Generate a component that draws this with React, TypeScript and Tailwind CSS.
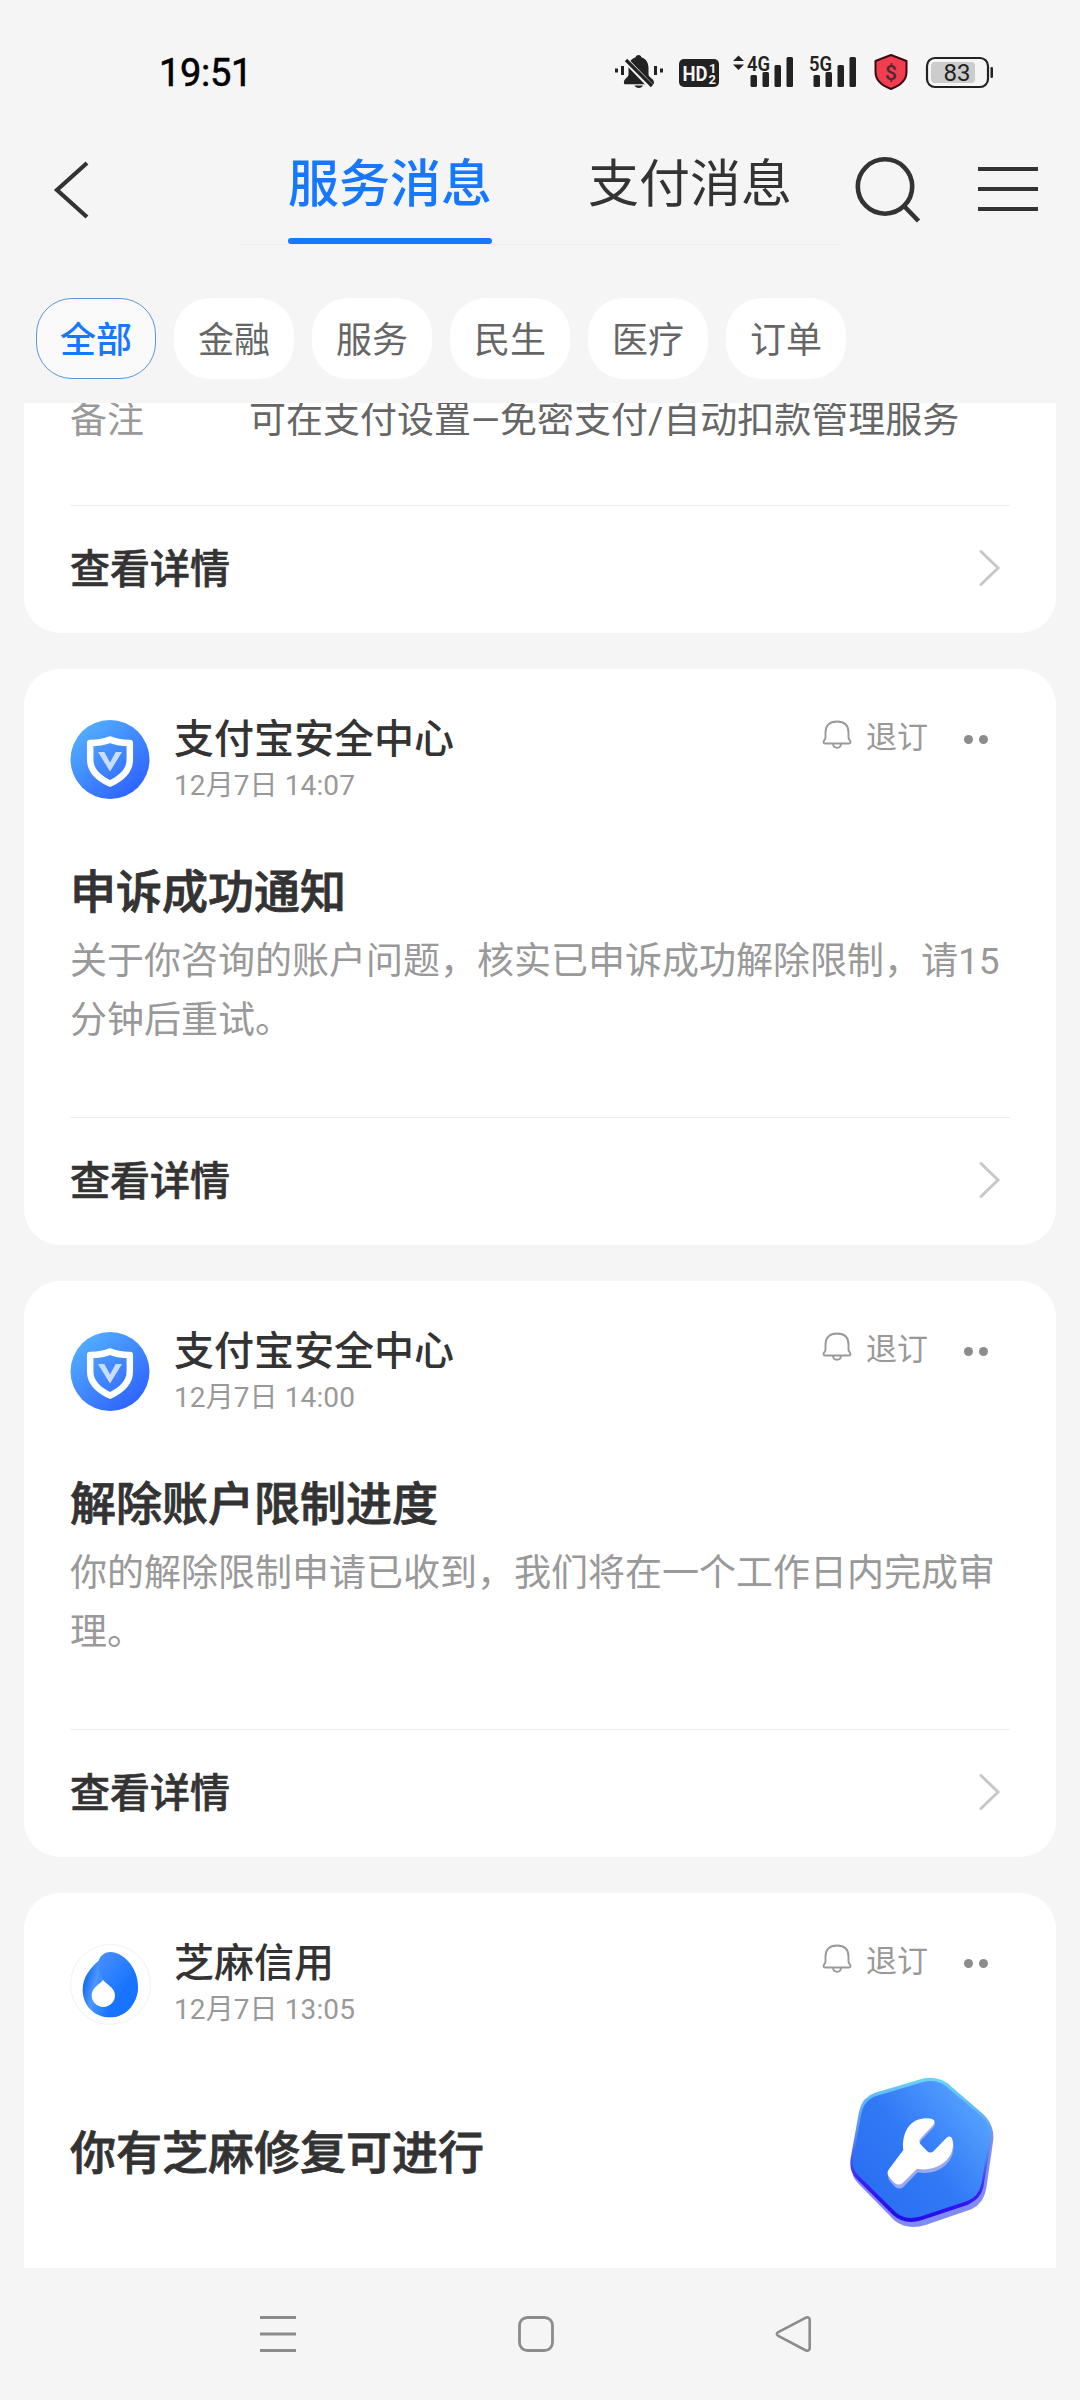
import type { ReactNode } from "react";

const chips = ["全部", "金融", "服务", "民生", "医疗", "订单"];

function StatusBar() {
  return (
    <div className="flex h-[144px] items-start justify-between pl-[159px] pr-[86px] text-[#222]">
      <span className="mt-[49px] text-[38px] leading-[48px] tracking-[-0.3px] text-black [-webkit-text-stroke:0.6px]">19:51</span>
      <svg className="mt-[50px]" width="382" height="44" viewBox="612 50 382 44" fill="none">
        {/* Muted bell */}
        <path d="M638.500 55c1.800 0 2.600 1 2.800 2.200 5.200 1.500 7.200 6 7.200 11v6c0 3.500 5.500 4 5.500 8.500 0 1-.6 1.600-1.500 1.600h-27c-1 0-1.600-.6-1.600-1.600 0-4.500 4.600-5 4.600-8.500v-6c0-5 2-9.500 7.200-11 .2-1.200 1-2.200 2.800-2.200z" fill="#222" />
        <path d="M634.500 85.500h8.500c-1 3.300-7.500 3.300-8.500 0z" fill="#222" />
        <path d="M624 58.500l28 29" stroke="#f5f5f5" strokeWidth="6" />
        <path d="M626 60l26 26" stroke="#222" strokeWidth="3.200" />
        <path d="M622.500 66v9M655.500 66v9M616.500 68.500v4M661.500 68.500v4" stroke="#222" strokeWidth="3" />
        {/* HD badge */}
        <rect x="679" y="59" width="40" height="28" rx="5" fill="#222" />
        <text x="682.500" y="80.500" fontSize="21" fontWeight="700" textLength="25" lengthAdjust="spacingAndGlyphs" fill="#f5f5f5">HD</text>
        <text x="709" y="73" fontSize="13" fontWeight="700" fill="#f5f5f5">1</text>
        <text x="708.500" y="84" fontSize="13" fontWeight="700" fill="#f5f5f5">2</text>
        {/* 4G */}
        <path d="M738.500 55.500l5.500 5.500h-11zM738.500 70l5.500-5.500h-11z" fill="#222" />
        <text x="747" y="70.500" fontSize="21" fontWeight="600" textLength="23" lengthAdjust="spacingAndGlyphs" fill="#222">4G</text>
        <g fill="#222">
          <rect x="750.500" y="75" width="6.500" height="12" rx="1.500" />
          <rect x="762.500" y="72" width="6.500" height="15" rx="1.500" />
          <rect x="774.500" y="65" width="6.500" height="22" rx="1.500" />
          <rect x="786.500" y="57" width="6.500" height="30" rx="1.500" />
        </g>
        {/* 5G */}
        <text x="809" y="70.500" fontSize="21" fontWeight="600" textLength="23" lengthAdjust="spacingAndGlyphs" fill="#222">5G</text>
        <g fill="#222">
          <rect x="813.500" y="75" width="6.500" height="12" rx="1.500" />
          <rect x="825.500" y="72" width="6.500" height="15" rx="1.500" />
          <rect x="837.500" y="65" width="6.500" height="22" rx="1.500" />
          <rect x="849.500" y="57" width="6.500" height="30" rx="1.500" />
        </g>
        {/* Payment shield */}
        <path d="M891 55l15.500 6v11c0 8-6 13.500-15.500 17-9.500-3.500-15.500-9-15.500-17V61z" fill="#f23c50" stroke="#3a0a10" strokeWidth="2" strokeLinejoin="round" />
        <text x="891" y="80" textAnchor="middle" fontSize="21" fontWeight="500" fill="#4a2a2e">$</text>
        {/* Battery */}
        <rect x="927" y="58" width="61" height="29" rx="8" stroke="#222" strokeWidth="2.200" />
        <rect x="931" y="62" width="44" height="21" rx="4" fill="#ccc" />
        <rect x="990.500" y="67" width="2.500" height="11" rx="1.200" fill="#222" />
        <text x="957" y="81" textAnchor="middle" fontSize="24" fill="#222">83</text>
      </svg>
    </div>
  );
}

function Header() {
  return (
    <header className="flex h-[154px] text-[51px] text-[#333]">
      <svg className="ml-[52px] mt-[16px] shrink-0" width="40" height="60" viewBox="0 0 40 60" fill="none" stroke="#333" strokeWidth="4.200">
        <path d="M35 3L5 30l30 27" />
      </svg>
      <div className="ml-[148px] flex h-[101px] w-[600px] justify-between border-b border-[#efefef] px-12">
        <div className="flex flex-col justify-between">
          <span className="mt-[11px] font-medium leading-[60px] text-[#1677ff]">服务消息</span>
          <span className="h-[6px] w-[204px] rounded-full bg-[#1677ff]" />
        </div>
        <span className="mt-[11px] leading-[60px]">支付消息</span>
      </div>
      <svg className="ml-[14px] mt-[10px] shrink-0" width="70" height="70" viewBox="854 154 70 70" fill="none" stroke="#333" strokeWidth="4.600">
        <circle cx="885" cy="186.500" r="27.200" />
        <path d="M904.500 206.500l14 14.500" />
      </svg>
      <div className="ml-[54px] mt-[23px] flex flex-col gap-4">
        <span className="h-1 w-[60px] bg-[#333]" />
        <span className="h-1 w-[60px] bg-[#333]" />
        <span className="h-1 w-[60px] bg-[#333]" />
      </div>
    </header>
  );
}

function ShieldAvatar({ id }: { id: string }) {
  return (
    <svg width="80" height="80" viewBox="0 0 80 80" fill="none">
      <defs>
        <linearGradient id={id} x1="12" y1="8" x2="66" y2="72" gradientUnits="userSpaceOnUse">
          <stop stopColor="#53adff" />
          <stop offset="1" stopColor="#2e63ff" />
        </linearGradient>
      </defs>
      <circle cx="40" cy="39.500" r="39.500" fill={`url(#${id})`} />
      <path d="M40 19.500c-5 2.300-12 3.300-19.800 3.600v16.500c0 11.500 8 18.500 19.800 24 11.800-5.500 19.800-12.500 19.800-24V23.100c-7.800-.3-14.800-1.300-19.800-3.600z" stroke="#fff" strokeWidth="6.500" strokeLinejoin="round" />
      <path d="M28 32h6.300L40 42.500 45.700 32H52L40 51.500z" fill="#c9deff" />
    </svg>
  );
}

function SesameAvatar() {
  return (
    <svg width="81" height="81" viewBox="90 128 243 243" fill="none">
      <defs>
        <linearGradient id="sesame-right" x1="180" y1="180" x2="270" y2="250" gradientUnits="userSpaceOnUse">
          <stop stopColor="#438cff" />
          <stop offset="1" stopColor="#1674ff" />
        </linearGradient>
        <linearGradient id="sesame-left" x1="128" y1="270" x2="215" y2="290" gradientUnits="userSpaceOnUse">
          <stop stopColor="#1a6fee" />
          <stop offset="0.350" stopColor="#4b98ff" />
          <stop offset="1" stopColor="#1674ff" />
        </linearGradient>
      </defs>
      <circle cx="211.500" cy="249.500" r="120" fill="#fff" stroke="#f2f2f2" strokeWidth="3" />
      <path d="M176 178c-26 22-48 50-48 87 0 48 35 83 82 83s84-40 84-95l-60-60z" fill="url(#sesame-left)" />
      <path d="M174 186c3-20 18-34 38-34 34 0 82 43 82 103 0 45-30 83-68 92 12-40 5-80-18-98-20-16-36-38-34-63z" fill="url(#sesame-right)" />
      <path d="M189 235c6 12 36 22 36 47a35 35 0 0 1-70 0c0-25 28-35 34-47z" fill="#fff" />
    </svg>
  );
}

function WrenchBadge() {
  return (
    <svg className="shrink-0" width="150" height="155" viewBox="205 525 450 465" fill="none">
      <defs>
        <linearGradient id="hex-face" x1="280" y1="880" x2="600" y2="620" gradientUnits="userSpaceOnUse">
          <stop stopColor="#2a70f2" />
          <stop offset="0.450" stopColor="#3279f6" />
          <stop offset="1" stopColor="#55a2ff" />
        </linearGradient>
        <linearGradient id="hex-rim" x1="440" y1="530" x2="400" y2="970" gradientUnits="userSpaceOnUse">
          <stop stopColor="#68d6fb" />
          <stop offset="0.450" stopColor="#5b8cf5" />
          <stop offset="0.750" stopColor="#3c1cf5" />
          <stop offset="1" stopColor="#2408e8" />
        </linearGradient>
      </defs>
      <path d="M286 590L425 545Q480 528 520 570L620 655Q646 685 640 725L620 865Q612 912 575 928L440 974Q385 992 345 962L235 850Q212 825 216 790L238 645Q248 605 286 590z" fill="#7f8df0" />
      <path d="M286 578L425 537Q480 522 520 564L611 643Q643 673 636 713L611 862Q602 898 565 914L425 961Q375 976 340 945L232 838Q207 815 213 775L238 635Q248 590 286 578z" fill="url(#hex-rim)" />
      <path d="M292 587L428 547Q476 533 512 570L604 648Q636 676 629 714L605 852Q597 890 563 903L425 949Q379 964 348 937L240 830Q214 808 220 775L245 642Q254 598 292 587z" fill="url(#hex-face)" />
      <path d="M371 750C365 700 390 655 440 655C470 655 468 668 458 678L424 714Q414 724 424 734L443 754Q453 762 463 752L500 714C512 703 520 712 520 736C518 790 465 822 412 811L370 854Q357 865 344 854L329 838Q318 825 329 812z" transform="translate(2 6)" fill="#9aa8ee" />
      <path d="M371 750C365 700 390 655 440 655C470 655 468 668 458 678L424 714Q414 724 424 734L443 754Q453 762 463 752L500 714C512 703 520 712 520 736C518 785 465 817 412 806L370 848Q357 859 344 848L329 832Q318 819 329 806z" fill="#fff" />
    </svg>
  );
}

function CardHeader({ avatar, name, time }: { avatar: ReactNode; name: string; time: string }) {
  return (
    <div className="flex h-[86px] items-start">
      <div className="mt-1 w-[104px] shrink-0">{avatar}</div>
      <div className="flex flex-col gap-[5px]">
        <span className="text-[40px] font-medium leading-[48px] text-[#333]">{name}</span>
        <span className="text-[28px] leading-[34px] tracking-[0.1px] text-[#999]">{time}</span>
      </div>
      <div className="ml-auto mr-[22px] flex items-start">
        <svg className="mt-[4px]" width="34" height="30" viewBox="0 0 34 30" fill="none" stroke="#999" strokeWidth="1.900" strokeLinejoin="round">
          <path d="M5.500 12.500C5.500 5.500 9.500 1.500 17 1.500s11.500 4 11.500 11v5c0 2.500 2 2.500 2 4.500 0 1-.6 1.500-1.500 1.500H5c-.9 0-1.500-.5-1.500-1.500 0-2 2-2 2-4.500z" />
          <path d="M13 24c.5 5 7.500 5 8 0" />
        </svg>
        <span className="ml-[12px] mt-px text-[31px] leading-[42px] text-[#999]">退订</span>
        <span className="ml-[36px] mt-[19px] flex gap-[6px]">
          <i className="size-[9px] rounded-full bg-[#8c8c8c]" />
          <i className="size-[9px] rounded-full bg-[#8c8c8c]" />
        </span>
      </div>
    </div>
  );
}

function CardFooter() {
  return (
    <div className="mt-auto flex h-[128px] shrink-0 items-center justify-between border-t border-[#eee] pr-2 text-[40px] font-medium text-[#333]">
      <span className="leading-[48px] [-webkit-text-stroke:0.6px]">查看详情</span>
      <svg className="mb-[3px]" width="26" height="40" viewBox="0 0 26 40" fill="none" stroke="#c8c8c8" strokeWidth="3" strokeLinecap="round">
        <path d="M5 3.500L22 20 5 36.500" />
      </svg>
    </div>
  );
}

function MessageCard({ id, time, title, body }: { id: string; time: string; title: string; body: string[] }) {
  return (
    <section className="flex h-[576px] shrink-0 flex-col rounded-[36px] bg-white px-[46px] pt-[47px]">
      <CardHeader avatar={<ShieldAvatar id={id} />} name="支付宝安全中心" time={time} />
      <h2 className="mt-[60px] text-[46px] font-medium leading-[60px] text-[#333] [-webkit-text-stroke:0.8px]">{title}</h2>
      <p className="mt-[10px] whitespace-nowrap text-[37px] leading-[59px] text-[#999]">
        {body.map((line) => (
          <span key={line} className="block">{line}</span>
        ))}
      </p>
      <CardFooter />
    </section>
  );
}

function NavBar() {
  return (
    <nav className="flex h-[132px] items-center justify-between pl-[259px] pr-[267px]">
      <svg width="38" height="38" viewBox="0 0 38 38" stroke="#8c8c8c" strokeWidth="3">
        <path d="M1 2.500h36M1 19h36M1 35.500h36" />
      </svg>
      <svg width="38" height="38" viewBox="0 0 38 38" fill="none" stroke="#8c8c8c" strokeWidth="2.800">
        <rect x="2.500" y="2.500" width="33" height="33" rx="8" />
      </svg>
      <svg width="38" height="38" viewBox="0 0 38 38" fill="none" stroke="#8c8c8c" strokeWidth="2.600">
        <path d="M30.500 2.800L3.300 17q-3 2 0 4l27.200 14.200q4 1.500 4.200-2V4.800q-.2-3.500-4.200-2z" />
      </svg>
    </nav>
  );
}

export default function App() {
  return (
    <div className="flex h-[2400px] w-[1080px] flex-col overflow-hidden bg-[#f5f5f5] font-['Roboto','Noto_Sans_CJK_SC',sans-serif]">
      <StatusBar />
      <Header />
      <div className="flex h-[105px] gap-[18px] pl-9">
        {chips.map((chip, i) => (
          <span
            key={chip}
            className={
              i === 0
                ? "flex h-[81px] w-[120px] items-center justify-center rounded-[36px] border border-[#5b95dc] bg-[#fafafa] pt-[5px] text-[36px] font-medium text-[#1677ff]"
                : "flex h-[81px] w-[120px] items-center justify-center rounded-[36px] bg-white pt-[5px] text-[36px] text-[#666]"
            }
          >
            {chip}
          </span>
        ))}
      </div>

      <main className="flex h-[1865px] flex-col gap-9 overflow-hidden px-6">
        {/* Tail of the card scrolled under the filter chips */}
        <section className="flex h-[230px] shrink-0 flex-col rounded-b-[36px] bg-white px-[46px]">
          <div className="flex whitespace-nowrap text-[37px] leading-[36px]">
            <span className="w-[179px] text-[#999]">备注</span>
            <span className="text-[#666]">可在支付设置—免密支付/自动扣款管理服务</span>
          </div>
          <CardFooter />
        </section>

        <MessageCard
          id="shield-a"
          time="12月7日 14:07"
          title="申诉成功通知"
          body={["关于你咨询的账户问题，核实已申诉成功解除限制，请15", "分钟后重试。"]}
        />
        <MessageCard
          id="shield-b"
          time="12月7日 14:00"
          title="解除账户限制进度"
          body={["你的解除限制申请已收到，我们将在一个工作日内完成审", "理。"]}
        />

        <section className="flex h-[420px] shrink-0 flex-col rounded-t-[36px] bg-white px-[46px] pt-[47px]">
          <CardHeader avatar={<SesameAvatar />} name="芝麻信用" time="12月7日 13:05" />
          <div className="mt-[49px] flex items-center justify-between pr-[12px]">
            <h2 className="text-[46px] font-medium leading-[60px] text-[#333] [-webkit-text-stroke:0.8px]">你有芝麻修复可进行</h2>
            <WrenchBadge />
          </div>
        </section>
      </main>

      <NavBar />
    </div>
  );
}
